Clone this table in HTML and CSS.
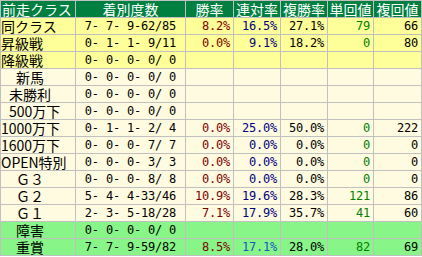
FILE: index.html
```html
<!DOCTYPE html>
<html lang="ja">
<head>
<meta charset="utf-8">
<title>前走クラス</title>
<link rel="stylesheet" href="styles.css">
</head>
<body>
<table class="tbl">
  <colgroup>
    <col class="c1"><col class="c2"><col class="c3"><col class="c4"><col class="c5"><col class="c6"><col class="c7">
  </colgroup>
  <thead>
    <tr class="hd">
      <th class="lbl-h">前走クラス</th><th>着別度数</th><th>勝率</th><th>連対率</th><th>複勝率</th><th>単回値</th><th>複回値</th>
    </tr>
  </thead>
  <tbody>
    <tr class="yl"><td class="lbl">同クラス</td><td class="rec">7- 7- 9-62/85</td><td class="num win">8.2%</td><td class="num ren">16.5%</td><td class="num fuk">27.1%</td><td class="num tan">79</td><td class="num fkv">66</td></tr>
    <tr class="yl"><td class="lbl">昇級戦</td><td class="rec">0- 1- 1- 9/11</td><td class="num win">0.0%</td><td class="num ren">9.1%</td><td class="num fuk">18.2%</td><td class="num tan">0</td><td class="num fkv">80</td></tr>
    <tr class="yl"><td class="lbl">降級戦</td><td class="rec">0- 0- 0- 0/ 0</td><td></td><td></td><td></td><td></td><td></td></tr>
    <tr class="cr"><td class="lbl ind-f">新馬</td><td class="rec">0- 0- 0- 0/ 0</td><td></td><td></td><td></td><td></td><td></td></tr>
    <tr class="cr"><td class="lbl ind-h">未勝利</td><td class="rec">0- 0- 0- 0/ 0</td><td></td><td></td><td></td><td></td><td></td></tr>
    <tr class="cr"><td class="lbl ind-h">500万下</td><td class="rec">0- 0- 0- 0/ 0</td><td></td><td></td><td></td><td></td><td></td></tr>
    <tr class="cr"><td class="lbl">1000万下</td><td class="rec">0- 1- 1- 2/ 4</td><td class="num win">0.0%</td><td class="num ren">25.0%</td><td class="num fuk">50.0%</td><td class="num tan">0</td><td class="num fkv">222</td></tr>
    <tr class="cr"><td class="lbl">1600万下</td><td class="rec">0- 0- 0- 7/ 7</td><td class="num win">0.0%</td><td class="num ren">0.0%</td><td class="num fuk">0.0%</td><td class="num tan">0</td><td class="num fkv">0</td></tr>
    <tr class="cr"><td class="lbl">OPEN特別</td><td class="rec">0- 0- 0- 3/ 3</td><td class="num win">0.0%</td><td class="num ren">0.0%</td><td class="num fuk">0.0%</td><td class="num tan">0</td><td class="num fkv">0</td></tr>
    <tr class="cr"><td class="lbl ind-f">Ｇ３</td><td class="rec">0- 0- 0- 8/ 8</td><td class="num win">0.0%</td><td class="num ren">0.0%</td><td class="num fuk">0.0%</td><td class="num tan">0</td><td class="num fkv">0</td></tr>
    <tr class="cr"><td class="lbl ind-f">Ｇ２</td><td class="rec">5- 4- 4-33/46</td><td class="num win">10.9%</td><td class="num ren">19.6%</td><td class="num fuk">28.3%</td><td class="num tan">121</td><td class="num fkv">86</td></tr>
    <tr class="cr"><td class="lbl ind-f">Ｇ１</td><td class="rec">2- 3- 5-18/28</td><td class="num win">7.1%</td><td class="num ren">17.9%</td><td class="num fuk">35.7%</td><td class="num tan">41</td><td class="num fkv">60</td></tr>
    <tr class="gr"><td class="lbl ind-f">障害</td><td class="rec">0- 0- 0- 0/ 0</td><td></td><td></td><td></td><td></td><td></td></tr>
    <tr class="gr"><td class="lbl ind-f">重賞</td><td class="rec">7- 7- 9-59/82</td><td class="num win">8.5%</td><td class="num ren ren-b">17.1%</td><td class="num fuk">28.0%</td><td class="num tan">82</td><td class="num fkv">69</td></tr>
  </tbody>
</table>
</body>
</html>
```
FILE: styles.css
```css
html, body {
  margin: 0;
  padding: 0;
  background: #ffffff;
}

.tbl {
  border-collapse: collapse;
  table-layout: fixed;
  width: 422px;
  font-family: "Noto Sans CJK JP", "DejaVu Sans", sans-serif;
  font-size: 14px;
}

.c1 { width: 75px; }
.c2 { width: 110px; }
.c3 { width: 48px; }
.c4 { width: 47px; }
.c5 { width: 47px; }
.c6 { width: 46px; }
.c7 { width: 48px; }

.tbl th,
.tbl td {
  border: 1px solid #c0c0c0;
  height: 16px;
  padding: 0;
  line-height: 16px;
  white-space: pre;
  overflow: hidden;
}

.hd th {
  background: #008040;
  color: #ffffff;
  font-weight: 400;
  text-align: center;
}

.hd .lbl-h {
  text-align: left;
  padding-left: 1px;
}

.yl td { background: #ffff99; }
.cr td { background: #fffbe0; }
.gr td { background: #88f588; }

.lbl {
  padding-left: 1px;
  color: #000000;
}

.ind-f { padding-left: 15px !important; }
.ind-h { padding-left: 8px !important; }

.rec,
.num {
  font-family: "DejaVu Sans Mono", "Liberation Mono", monospace;
  font-size: 12px;
  letter-spacing: -0.2px;
}

.rec {
  text-align: center;
  color: #000000;
}

.num {
  text-align: right;
  padding-right: 3px !important;
}

.win { color: #800000; }
.ren { color: #000080; }
.ren-b { color: #1a56c4; }
.fuk { color: #000000; }
.tan { color: #008000; }
.fkv { color: #000000; }
```
